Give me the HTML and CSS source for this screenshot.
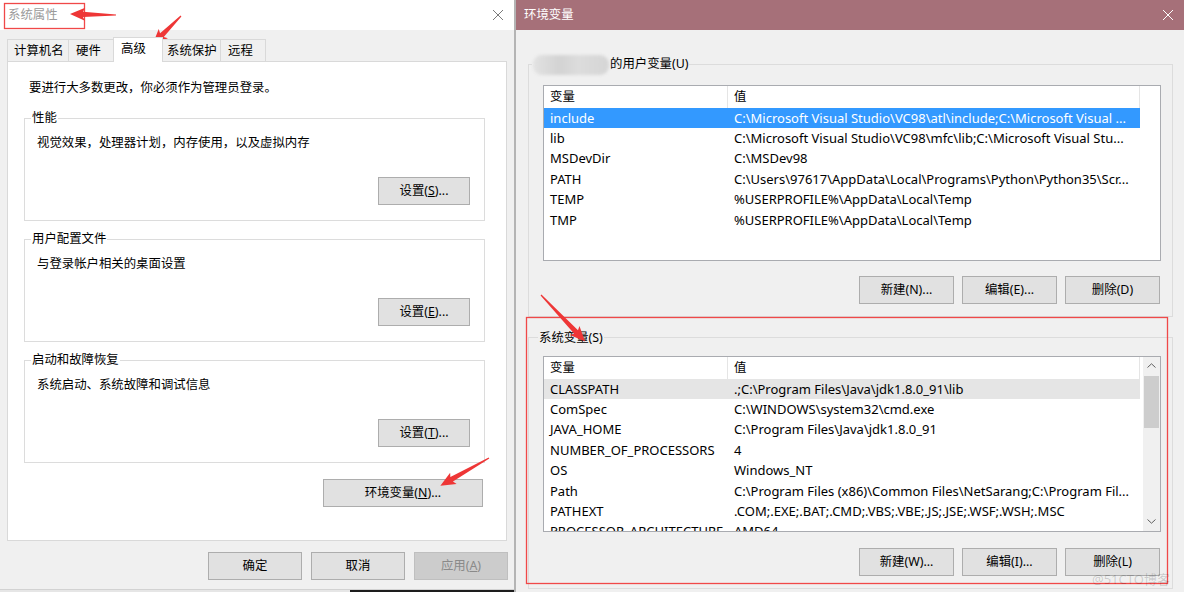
FILE: index.html
```html
<!DOCTYPE html>
<html lang="zh-CN">
<head>
    <meta charset="UTF-8">
    <meta name="viewport" content="width=device-width, initial-scale=1.0">
    <title>系统属性 - 环境变量</title>
    <link rel="stylesheet" href="styles.css">
</head>
<body>
<div class="screen">
    <!-- 系统属性 dialog -->
    <section class="sysprop">
        <div class="titlebar">
            <span class="title">系统属性</span>
            <svg class="close" viewBox="0 0 12 12"><path d="M1 1L11 11M11 1L1 11"/></svg>
        </div>
        <div class="tabs">
            <div class="tab t-name">计算机名</div>
            <div class="tab t-hw">硬件</div>
            <div class="tab t-adv active">高级</div>
            <div class="tab t-prot">系统保护</div>
            <div class="tab t-remote">远程</div>
        </div>
        <div class="panel">
            <p class="intro">要进行大多数更改，你必须作为管理员登录。</p>
            <fieldset class="group">
                <legend>性能</legend>
                <p class="desc">视觉效果，处理器计划，内存使用，以及虚拟内存</p>
                <div class="actions"><button class="btn btn-set">设置(<u>S</u>)...</button></div>
            </fieldset>
            <fieldset class="group">
                <legend>用户配置文件</legend>
                <p class="desc">与登录帐户相关的桌面设置</p>
                <div class="actions"><button class="btn btn-set">设置(<u>E</u>)...</button></div>
            </fieldset>
            <fieldset class="group">
                <legend>启动和故障恢复</legend>
                <p class="desc">系统启动、系统故障和调试信息</p>
                <div class="actions"><button class="btn btn-set">设置(<u>T</u>)...</button></div>
            </fieldset>
            <div class="actions env-row"><button class="btn btn-env">环境变量(<u>N</u>)...</button></div>
        </div>
        <div class="dlg-buttons">
            <button class="btn btn-dlg">确定</button>
            <button class="btn btn-dlg">取消</button>
            <button class="btn btn-dlg" disabled>应用(<u>A</u>)</button>
        </div>
        <div class="edge"></div>
    </section>

    <div class="divider"></div>

    <!-- 环境变量 dialog -->
    <section class="envvars">
        <div class="titlebar env-title">
            <span class="title">环境变量</span>
            <svg class="close" viewBox="0 0 12 12"><path d="M1 1L11 11M11 1L1 11"/></svg>
        </div>

        <fieldset class="vargroup user">
            <legend><span class="blur"></span>的用户变量(U)</legend>
            <div class="listview">
                <div class="list">
                    <div class="lv-head"><span>变量</span><span>值</span><span></span></div>
                    <div class="lv-row sel"><span>include</span><span>C:\Microsoft Visual Studio\VC98\atl\include;C:\Microsoft Visual ...</span></div>
                    <div class="lv-row"><span>lib</span><span>C:\Microsoft Visual Studio\VC98\mfc\lib;C:\Microsoft Visual Stu...</span></div>
                    <div class="lv-row"><span>MSDevDir</span><span>C:\MSDev98</span></div>
                    <div class="lv-row"><span>PATH</span><span>C:\Users\97617\AppData\Local\Programs\Python\Python35\Scr...</span></div>
                    <div class="lv-row"><span>TEMP</span><span>%USERPROFILE%\AppData\Local\Temp</span></div>
                    <div class="lv-row"><span>TMP</span><span>%USERPROFILE%\AppData\Local\Temp</span></div>
                </div>
            </div>
            <div class="actions var-actions">
                <button class="btn btn-var">新建(N)...</button>
                <button class="btn btn-var">编辑(E)...</button>
                <button class="btn btn-var">删除(D)</button>
            </div>
        </fieldset>

        <fieldset class="vargroup sys">
            <legend>系统变量(S)</legend>
            <div class="listview">
                <div class="list">
                    <div class="lv-head"><span>变量</span><span>值</span><span></span></div>
                    <div class="lv-row hover"><span>CLASSPATH</span><span>.;C:\Program Files\Java\jdk1.8.0_91\lib</span></div>
                    <div class="lv-row"><span>ComSpec</span><span>C:\WINDOWS\system32\cmd.exe</span></div>
                    <div class="lv-row"><span>JAVA_HOME</span><span>C:\Program Files\Java\jdk1.8.0_91</span></div>
                    <div class="lv-row"><span>NUMBER_OF_PROCESSORS</span><span>4</span></div>
                    <div class="lv-row"><span>OS</span><span>Windows_NT</span></div>
                    <div class="lv-row"><span>Path</span><span>C:\Program Files (x86)\Common Files\NetSarang;C:\Program Fil...</span></div>
                    <div class="lv-row"><span>PATHEXT</span><span>.COM;.EXE;.BAT;.CMD;.VBS;.VBE;.JS;.JSE;.WSF;.WSH;.MSC</span></div>
                    <div class="lv-row"><span>PROCESSOR_ARCHITECTURE</span><span>AMD64</span></div>
                </div>
                <div class="scrollbar">
                    <div class="sb-btn"><svg viewBox="0 0 9 5"><path d="M0.5 4.5L4.5 0.8L8.5 4.5"/></svg></div>
                    <div class="sb-thumb"></div>
                    <div class="sb-track"></div>
                    <div class="sb-btn"><svg viewBox="0 0 9 5"><path d="M0.5 0.5L4.5 4.2L8.5 0.5"/></svg></div>
                </div>
            </div>
            <div class="actions var-actions">
                <button class="btn btn-var">新建(W)...</button>
                <button class="btn btn-var">编辑(I)...</button>
                <button class="btn btn-var">删除(L)</button>
            </div>
        </fieldset>
    </section>

    <!-- red annotations drawn on top of the screenshot -->
    <svg class="marks" viewBox="0 0 1184 592">
        <rect class="mark-box" x="4.5" y="3.5" width="80" height="25"/>
        <rect class="mark-box" x="526.5" y="317.5" width="641" height="266"/>
        <polygon class="arrow" transform="translate(116 15) rotate(181.2)" points="0,-0.6 33,-2.6 31,-6.5 46,0 31,6.5 33,2.6 0,0.6"/>
        <polygon class="arrow" transform="translate(181 16) rotate(135)" points="0,-0.6 27,-2.6 25,-6.5 40,0 25,6.5 27,2.6 0,0.6"/>
        <polygon class="arrow" transform="translate(489 458) rotate(150.3)" points="0,-0.6 43,-2.6 41,-6.5 56,0 41,6.5 43,2.6 0,0.6"/>
        <polygon class="arrow" transform="translate(541 295) rotate(46.5)" points="0,-0.6 51,-2.6 49,-6.5 64,0 49,6.5 51,2.6 0,0.6"/>
    </svg>
    <div class="watermark">@51CTO博客</div>
</div>
</body>
</html>
```

FILE: styles.css
```css
html, body {
    margin: 0;
    padding: 0;
}
body {
    font-family: "Noto Sans", "Noto Sans CJK SC", sans-serif;
    font-size: 12.4px;
    color: #000;
    background: #f0f0f0;
}
*, *::before, *::after {
    box-sizing: border-box;
}
.screen {
    position: relative;
    display: flex;
    width: 1184px;
    height: 592px;
    overflow: hidden;
}

/* ---------- shared bits ---------- */
.titlebar {
    display: flex;
    align-items: center;
    justify-content: space-between;
    height: 30px;
    padding: 0 10px 0 8px;
    background: #fff;
}
.titlebar .title {
    color: #9a9a9a;
    line-height: 16px;
}
.close {
    width: 12px;
    height: 12px;
    fill: none;
    stroke: #7a7a7a;
    stroke-width: 1;
}
.btn {
    font: inherit;
    color: #000;
    height: 28px;
    padding: 0;
    background: #e1e1e1;
    border: 1px solid #adadad;
    border-radius: 0;
    text-align: center;
    line-height: 16px;
}
.btn:disabled {
    background: #cccccc;
    border-color: #bfbfbf;
    color: #8a8a8a;
}
.actions {
    display: flex;
    justify-content: flex-end;
}
fieldset {
    margin: 0;
    min-width: 0;
    border: 1px solid #dcdcdc;
}
legend {
    padding: 0 1px;
    line-height: 16px;
}

/* ---------- 系统属性 ---------- */
.sysprop {
    width: 514px;
    display: flex;
    flex-direction: column;
    background: #f0f0f0;
}
.tabs {
    position: relative;
    z-index: 1;
    display: flex;
    align-items: flex-end;
    height: 25px;
    margin-top: 7px;
    padding-left: 7px;
}
.tab {
    height: 22px;
    margin-bottom: 1px;
    margin-right: -1px;
    padding-left: 6px;
    line-height: 21px;
    border: 1px solid #d9d9d9;
    border-bottom: 0;
    background: #f0f0f0;
    white-space: nowrap;
}
.t-name { width: 62px; }
.t-hw { width: 46px; padding-left: 7px; }
.t-adv { width: 50px; }
.t-prot { width: 59px; padding-left: 4px; }
.t-remote { width: 46px; padding-left: 7px; }
.tab.active {
    position: relative;
    z-index: 2;
    height: 25px;
    margin-bottom: 0;
    padding-left: 7px;
    background: #fff;
}
.panel {
    width: 500px;
    height: 480px;
    margin: -1px 0 0 7px;
    padding: 18px 21px 0 16px;
    background: #fff;
    border: 1px solid #d9d9d9;
}
.intro {
    margin: 0 0 0 5px;
    line-height: 16px;
}
.group {
    margin-top: 14px;
    padding: 9px 14px 15px 6px;
}
.group + .group {
    margin-top: 10px;
}
.desc {
    margin: 0 0 0 6px;
    line-height: 16px;
}
.group .actions {
    margin-top: 26px;
}
.btn-set {
    width: 92px;
}
.env-row {
    margin-top: 16px;
    padding-right: 2px;
}
.btn-env {
    width: 160px;
}
.dlg-buttons {
    display: flex;
    justify-content: flex-end;
    gap: 9px;
    margin-top: 11px;
    padding-right: 6px;
}
.btn-dlg {
    width: 94px;
}
.edge {
    margin-top: auto;
    height: 3px;
    background:
        linear-gradient(#d2d2d2 0 1px, transparent 1px),
        linear-gradient(to right, #e6e6e6 350px, #1d1d1d 350px);
}
.divider {
    width: 2px;
    background: #b4b4b4;
}

/* ---------- 环境变量 ---------- */
.envvars {
    width: 668px;
    display: flex;
    flex-direction: column;
    background: #f0f0f0;
}
.env-title {
    background: #a67079;
}
.env-title .title {
    color: #fff;
}
.env-title .close {
    stroke: #fff;
}
.vargroup {
    width: 645px;
    margin-left: 12px;
    padding: 12px 11px 12px 14px;
}
.vargroup.user {
    margin-top: 26px;
}
.vargroup.sys {
    margin-top: 13px;
    padding-top: 10px;
}
.vargroup.user legend {
    margin-left: -11px;
}
.vargroup.sys legend {
    margin-left: -5px;
}
.blur {
    display: inline-block;
    width: 76px;
    height: 20px;
    margin: -2px 1px -2px 0;
    vertical-align: middle;
    border-radius: 9px;
    background: linear-gradient(to right, #e2e2e2, #d3d3d3 35%, #dcdcdc 60%, #d5d5d5);
    filter: blur(1.5px);
}
.listview {
    display: flex;
    height: 176px;
    background: #fff;
    border: 1px solid #a9abb0;
    overflow: hidden;
}
.list {
    flex: 1;
    min-width: 0;
    font-size: 13px;
}
.lv-head {
    display: flex;
    height: 22px;
    line-height: 22px;
    font-size: 12.4px;
}
.lv-head span {
    border-right: 1px solid #e5e5e5;
    padding-left: 6px;
}
.lv-head span:first-child,
.lv-row span:first-child {
    width: 184px;
    flex: none;
}
.lv-head span:nth-child(2),
.lv-row span:nth-child(2) {
    width: 412px;
    flex: none;
}
.lv-head span:last-child {
    flex: 1;
    border-right: 0;
}
.lv-row {
    display: flex;
    width: 596px;
    height: 20.4px;
    line-height: 20px;
}
.lv-row span {
    padding-left: 6px;
    overflow: hidden;
    white-space: nowrap;
}
.lv-row.sel {
    background: #3399ff;
    color: #fff;
}
.lv-row.hover {
    background: #e5e5e5;
}
.scrollbar {
    display: flex;
    flex-direction: column;
    width: 17px;
    background: #f0f0f0;
}
.sb-btn {
    display: flex;
    align-items: center;
    justify-content: center;
    height: 18px;
}
.sb-btn svg {
    width: 9px;
    height: 5px;
    fill: none;
    stroke: #606060;
    stroke-width: 1;
}
.sb-thumb {
    height: 52px;
    margin: 1px 1px 0;
    background: #cdcdcd;
}
.sb-track {
    flex: 1;
}
.var-actions {
    gap: 8px;
    margin-top: 15px;
    padding-right: 1px;
}
.vargroup.sys .var-actions {
    margin-top: 16px;
}
.btn-var {
    width: 95px;
}

/* ---------- annotations ---------- */
.marks {
    position: absolute;
    left: 0;
    top: 0;
    width: 1184px;
    height: 592px;
    pointer-events: none;
}
.mark-box {
    fill: none;
    stroke: #f04848;
    stroke-width: 1.3;
}
.arrow {
    fill: #ee3636;
}
.watermark {
    position: absolute;
    left: 1092px;
    top: 569px;
    font-size: 13px;
    color: rgba(0, 0, 0, 0.17);
}
```
